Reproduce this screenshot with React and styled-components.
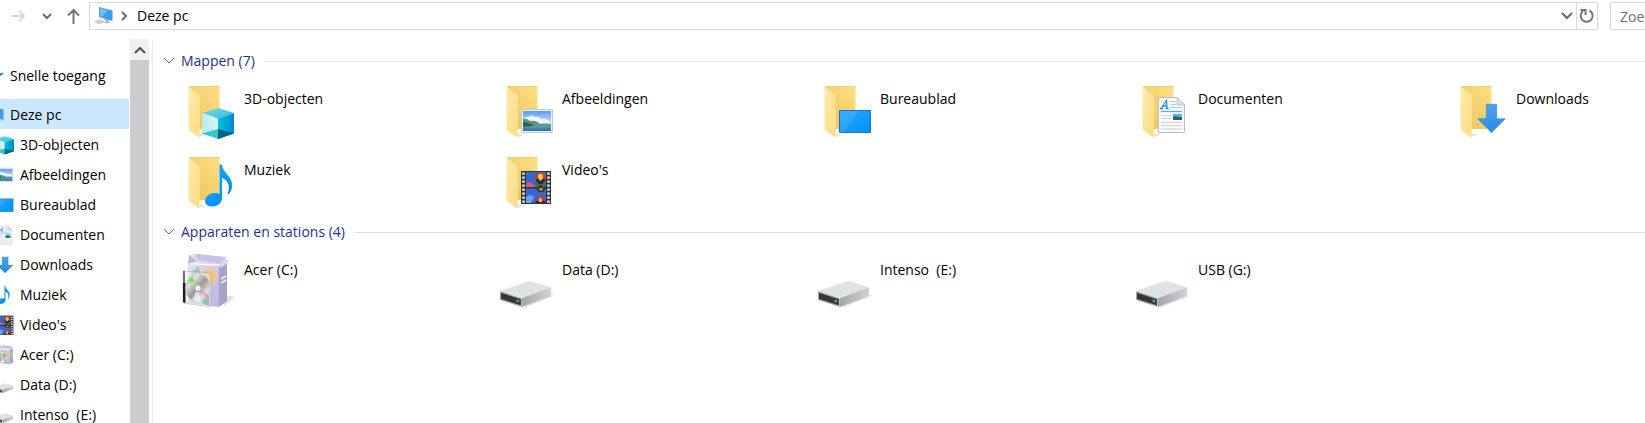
import React from "react";
import styled, { createGlobalStyle } from "styled-components";

const GlobalStyle = createGlobalStyle`
  * { box-sizing: border-box; }
  body {
    margin: 0;
    background: #fff;
    color: #000;
    font: 14px/20px "Open Sans", "Noto Sans", sans-serif;
    overflow: hidden;
  }
  button, input { font: inherit; color: inherit; }
  a { color: inherit; text-decoration: none; }
  svg { display: block; flex: none; }
`;

const Window = styled.div`
  display: flex;
  flex-direction: column;
  height: 100vh;
`;

const Toolbar = styled.header`
  display: flex;
  align-items: center;
  height: 39px;
  padding: 2px 0 9px 6px;
`;

const IconButton = styled.button`
  display: flex;
  align-items: center;
  justify-content: center;
  width: ${(p) => p.$width}px;
  height: 100%;
  padding: 0;
  border: 0;
  background: ${(p) => p.$background || "transparent"};
`;

const AddressBar = styled.div`
  display: flex;
  align-items: center;
  flex: 1;
  min-width: 0;
  height: 28px;
  margin-left: 6px;
  border: 1px solid #d9d9d9;
`;

const Crumbs = styled.nav`
  display: flex;
  align-items: center;
  flex: 1;
  gap: 8px;
  padding-left: 3px;
`;

const CrumbLink = styled.a`
  white-space: nowrap;
`;

const Refresh = styled.div`
  display: flex;
  height: 100%;
  border-left: 1px solid #d9d9d9;
`;

const SearchInput = styled.input`
  flex: none;
  width: 35px;
  height: 28px;
  margin-left: 12px;
  padding: 0 0 0 9px;
  border: 1px solid #d9d9d9;
  border-right: 0;
  border-radius: 0;
  background: #fff;
  outline: 0;
  &::placeholder { color: #6d6d6d; opacity: 1; }
`;

const Body = styled.div`
  display: flex;
  flex: 1;
  min-height: 0;
`;

const Sidebar = styled.nav`
  flex: none;
  width: 130px;
  padding: 21px 1px 0 0;
  overflow: hidden;
`;

const TreeLink = styled.a`
  display: flex;
  align-items: center;
  gap: 6px;
  height: 30px;
  margin-left: -16px;
  margin-bottom: ${(p) => (p.$spaced ? 9 : 0)}px;
  padding-top: 2px;
  padding-left: ${(p) => (p.$nested ? 10 : 0)}px;
  background: ${(p) => (p.$selected ? "#cce8ff" : "transparent")};
  white-space: pre;
`;

const ScrollBar = styled.div`
  flex: none;
  display: flex;
  flex-direction: column;
  width: 19px;
  background: #cdcdcd;
`;

const ScrollUp = styled.div`
  height: 21px;
`;

const Content = styled.main`
  flex: 1;
  min-width: 0;
  margin-left: 3px;
  padding: 10px 0 0 10px;
  border-left: 1px solid #f0f0f0;
`;

const GroupHeader = styled.button`
  display: flex;
  align-items: center;
  gap: 6px;
  width: 100%;
  height: 24px;
  padding: 0;
  border: 0;
  background: transparent;
  color: #1e3287;
  text-align: left;
  &::after {
    content: "";
    flex: 1;
    height: 1px;
    margin-left: 3px;
    background: #e2e2e2;
  }
`;

const Tiles = styled.div`
  display: grid;
  grid-template-columns: repeat(auto-fill, 160px);
  column-gap: 158px;
  padding: 5px 0 0 17px;
`;

const Tile = styled.a`
  display: flex;
  gap: 4px;
  height: 71px;
  padding-top: 4px;
  white-space: pre;
`;

const TileLabel = styled.span`
  padding-top: 7px;
`;

const Defs = styled.svg`
  position: absolute;
`;

const Gradients = () => (
  <Defs width="0" height="0" aria-hidden="true">
    <defs>
      <linearGradient id="folderBack" x1="0" y1="1" x2="1" y2="0">
        <stop offset="0" stopColor="#e9c257" /><stop offset="1" stopColor="#ffe085" />
      </linearGradient>
      <linearGradient id="folderFlap" x1="0" y1="0" x2="1" y2="1">
        <stop offset="0" stopColor="#ffeaa8" /><stop offset="1" stopColor="#fbdc84" />
      </linearGradient>
      <linearGradient id="cubeRight">
        <stop offset="0" stopColor="#00c3d8" /><stop offset="1" stopColor="#0087d2" />
      </linearGradient>
      <linearGradient id="cubeLeft">
        <stop offset="0" stopColor="#b5ecee" /><stop offset="1" stopColor="#d9f6f7" />
      </linearGradient>
      <linearGradient id="cubeTop" x1="0" y1="0" x2="1" y2="1">
        <stop offset="0" stopColor="#7fdde6" /><stop offset="1" stopColor="#2cb9dd" />
      </linearGradient>
      <linearGradient id="sky" x1="0" y1="0" x2="0" y2="1">
        <stop offset="0" stopColor="#5a9af0" /><stop offset="1" stopColor="#e3f3fd" />
      </linearGradient>
      <linearGradient id="lake" x1="0" y1="0" x2="0" y2="1">
        <stop offset="0" stopColor="#77a9bf" /><stop offset="1" stopColor="#286f9d" />
      </linearGradient>
      <linearGradient id="screen" x1="0" y1="0" x2="1" y2="1">
        <stop offset="0" stopColor="#29a9ff" /><stop offset="1" stopColor="#0090f5" />
      </linearGradient>
      <linearGradient id="arrow" x1="0" y1="0" x2="0" y2="1">
        <stop offset="0" stopColor="#4aa3f0" /><stop offset="1" stopColor="#2a8be0" />
      </linearGradient>
      <linearGradient id="note" x1="0" y1="0" x2="1" y2="1">
        <stop offset="0" stopColor="#1dadff" /><stop offset="1" stopColor="#0086ea" />
      </linearGradient>
      <linearGradient id="driveSide">
        <stop offset="0" stopColor="#a3a5a8" /><stop offset="1" stopColor="#d0d2d4" />
      </linearGradient>
      <linearGradient id="boxFront" x1="0" y1="0" x2="1" y2="1">
        <stop offset="0" stopColor="#e2e0f6" /><stop offset="1" stopColor="#b9b5df" />
      </linearGradient>
      <linearGradient id="disc" x1="0" y1="0" x2="1" y2="1">
        <stop offset="0" stopColor="#8a8a8a" /><stop offset=".25" stopColor="#e2e2e2" />
        <stop offset=".5" stopColor="#999999" /><stop offset=".75" stopColor="#e0e0e0" />
        <stop offset="1" stopColor="#808080" />
      </linearGradient>
    </defs>
  </Defs>
);

const FolderBase = () => (
  <g>
    <path d="M19 55L26 53L20 51Z" fill="#e4e4e4" />
    <path d="M9 4H39.500V47H9Z" fill="url(#folderBack)" />
    <path d="M9 4.500H39.500" stroke="#efcf74" />
    <path d="M8.500 4.500L20 13.500V42L19.300 55.500L8.500 48Z" fill="url(#folderFlap)" />
  </g>
);

const Cube = () => (
  <g>
    <path d="M38 26L54 31L38 36.500L22 31Z" fill="url(#cubeTop)" />
    <path d="M22 31L38 36.500V57L22 51.500Z" fill="url(#cubeLeft)" />
    <path d="M54 31L38 36.500V57L54 51.500Z" fill="url(#cubeRight)" />
    <path d="M22 51.500L38 47V57Z" fill="#36c6d3" />
    <path d="M54 51.500L38 47V57Z" fill="#006580" />
  </g>
);

const Picture = () => (
  <g>
    <path d="M23.500 27.500H54.500V50.500H23.500Z" fill="#eef2f5" stroke="#c3cbd2" />
    <path d="M25 29H53V43H25Z" fill="url(#sky)" />
    <path d="M26 37q2-3 5-2q3-3 6 0q5-1 6 2q5-1 8 2v2H26Z" fill="#fff" opacity=".8" />
    <path d="M25 43H53V49H25Z" fill="url(#lake)" />
    <path d="M25 37q4-1 7 2q6-1 10 3q6-1 11 0v2H25Z" fill="#5f9487" />
    <path d="M25 40q6 0 11 4l-11 1Z" fill="#2c6655" />
  </g>
);

const Desktop = () => (
  <g>
    <path d="M23.500 28.500H54.500V50.500H23.500Z" fill="url(#screen)" stroke="#1577bd" />
    <path d="M24 29H43L28 50H24Z" fill="#fff" opacity=".09" />
  </g>
);

const Document = () => (
  <g>
    <path d="M24.500 15.500H43L50.500 23V50.500H24.500Z" fill="#f8f9fa" stroke="#b9bec3" />
    <path d="M43 15.500V23H50.500Z" fill="#dfe3e6" stroke="#b9bec3" strokeWidth=".8" />
    <path d="M27 26.500L32.500 18.500L33 26.500M29 24H33M26 26.500H29M31.500 26.500H34.500" fill="none" stroke="#2d8fd2" strokeWidth="1.300" />
    <path d="M36 19.500H42M36 22.500H42M36 25.500H48" stroke="#a5d2ef" />
    <path d="M27 29.500H48" stroke="#55ade2" strokeWidth="1.200" />
    <path d="M27 33.500H37M27 36.500H37M27 40.500H48M27 43.500H48M27 47H48" stroke="#cfd3d7" />
    <path d="M39 32H48V38H39Z" fill="#58b2e8" />
    <path d="M39 35q3-2 5 0h4v3H39Z" fill="#2a6477" />
  </g>
);

const Download = () => (
  <path d="M34.300 22.300H44.700V36.700H53.300L39.500 50.700L25.700 36.700H34.300Z" fill="url(#arrow)" stroke="#3186d0" strokeWidth=".6" />
);

const Music = () => (
  <path d="M39.500 11.500H42C42.500 20 52.500 23 52 33C52 37 50 40 48.500 41.500L47.500 40.500C51 34 48 27 42 25V45C42 50 37 53.500 32 53.500C28 53.500 25 51.500 25 48C25 43 30 40 35 40C37 40 38.500 40.500 39.500 41Z" fill="url(#note)" />
);

const Film = () => (
  <g>
    <path d="M23 18H53V51H23Z" fill="#343434" />
    <path d="M28 19H48V34H28ZM28 35.500H48V50H28Z" fill="#3568cf" />
    <path d="M28 32Q37 29 48 31V34H28Z" fill="#238048" />
    <path d="M28 31q3-4 6 0q3 0 3 3H28Z" fill="#e45581" />
    <path d="M37 25A5.500 5 0 0 1 48 25Q48 28 44.500 31H40.500Q37 28 37 25Z" fill="#e22f22" />
    <path d="M40.500 21Q39 25 41.500 30H43.500Q46 25 44.500 21Z" fill="#f5cd25" />
    <path d="M37.500 27L40 25.500L42.500 28L45 25.500L47.500 27L44.500 31H40.500Z" fill="#33204a" />
    <path d="M41 32H44V34H41Z" fill="#4d2918" />
    <path d="M38 35.500H48L44.500 39H41Z" fill="#3a2140" />
    <path d="M40.500 35.500H45.500L43 38Z" fill="#e9ca2a" />
    <path d="M41.500 39.500H44.500V41.500H41.500Z" fill="#c9402a" />
    <path d="M28 44q5-4 8 0l-3 6H28Z" fill="#6b9eee" />
    <path d="M37.500 50Q37 44.500 42.500 44.500T47.500 50Z" fill="#e22f22" />
    <path d="M40.500 50L41.500 45H43.500L44.500 50Z" fill="#f5cd25" />
    <path d="M37.500 48.500L39.500 47.500L42.500 49.500L45.500 47.500L47.500 48.500V50H37.500Z" fill="#33204a" />
    <path d="M25.500 19.500V50M50.500 19.500V50" stroke="#e6e6e6" strokeWidth="2.600" strokeDasharray="2.200 1.800" />
  </g>
);

const SetupBox = () => (
  <g>
    <path d="M44 53L53 46Q56 43 50 43L43 44Z" fill="#d6d6d6" opacity=".7" />
    <path d="M9 2L16 1L45 4L47 8L44 12L9 10Z" fill="#dedcf3" />
    <path d="M16 1L46 4L40 11L17 7Z" fill="#c5c2e8" />
    <path d="M9 2L16 8L8 11Z" fill="#bbb8c8" />
    <path d="M8 11L39 13V54L8 50Z" fill="url(#boxFront)" />
    <path d="M39 13L47 8V48L39 54Z" fill="#a7a3c8" />
    <path d="M40 11L48 6V10L40 15Z" fill="#d9d6ef" />
    <path d="M41 26L46 23M41 30L46 27" stroke="#eeedf8" strokeWidth="1.500" />
    <path d="M10 21L18 13L24 27Z" fill="#9ec7b0" />
    <circle cx="29" cy="24" r="8" fill="#f3c483" />
    <path d="M3 18L31 20V54L3 50Z" fill="#e9eeed" opacity=".5" stroke="#9ba6a4" />
    <path d="M3 18L5 18V50L3 49Z" fill="#6b6f6e" />
    <path d="M3 30H5.500V50L3 49Z" fill="#1f1f1f" />
    <path d="M21 49L29 42V53Z" fill="#8bc5a1" />
    <ellipse cx="18" cy="35" rx="12.500" ry="14" fill="url(#disc)" />
    <path d="M18 35L7 29Q9 24 12 23Z" fill="#a9dc94" />
    <path d="M9 28L12 24L14 28Z" fill="#63e637" />
    <path d="M18 35L29 43L27 45Z" fill="#ee91d2" />
    <path d="M18 35L12 47L21 49Z" fill="#fff" opacity=".6" />
    <circle cx="18" cy="35" r="3.500" fill="#e9e9e9" stroke="#999" />
    <circle cx="18" cy="35" r="1.300" fill="#fff" />
  </g>
);

const Drive = () => (
  <g>
    <path d="M24 54L53 42L56 42.500L27 54.500Z" fill="#d4d4d4" opacity=".7" />
    <path d="M2 38L32 27.700L53 34.300L23.700 45.300Z" fill="#e1e2e5" />
    <path d="M23.700 45.300L53 34.300V43L23.700 54Z" fill="url(#driveSide)" />
    <path d="M2 38L23.700 45.300V54L2 47Z" fill="#a8aaac" />
    <path d="M3 39.700L22.800 46.300V52.300L3 46Z" fill="#353738" />
    <path d="M18.500 46.500L21 47.300V49.500L18.500 48.700Z" fill="#35d23c" />
  </g>
);

const Computer = () => (
  <g>
    <path d="M12 12L16 13.500V15.500L18 16.500L14 17.500L10 16L12 15Z" fill="#b4bcc2" />
    <path d="M6 1L19.500 4.500V15L6 11Z" fill="#7b8f9c" />
    <path d="M6.800 2L18.800 5.200V14L6.800 10.300Z" fill="#2da5f3" />
    <path d="M6.800 2L15 4.200L9 11L6.800 10.300Z" fill="#6cc0f8" />
    <path d="M0 15.500L7 13L14 15.500L6 18.500Z" fill="#dcdfe2" />
    <path d="M2 15.500L8 17.500M4 14.500L11 16.500M8 14L3 16.500M11 15.300L5 18" stroke="#b9bec2" strokeWidth=".5" />
  </g>
);

const Pin = () => (
  <path d="M10 3L12.500 7.500L20 7L14 12L15 18L10 15L4 18L6 12L0 7L8 7.500Z" fill="#1b83d3" />
);

const SmallIcon = ({ art: Art, box }) => (
  <svg width="20" height="20" viewBox={box} aria-hidden="true"><Art /></svg>
);

const Stroke = ({ width, height, d, color = "#6b6b6b", weight = 2 }) => (
  <svg width={width} height={height} viewBox={`0 0 ${width} ${height}`} aria-hidden="true">
    <path d={d} fill="none" stroke={color} strokeWidth={weight} />
  </svg>
);

const tree = [
  { label: "Snelle toegang", art: Pin, box: "0 0 20 20", root: true, spaced: true },
  { label: "Deze pc", art: Computer, box: "0 0 20 20", root: true, selected: true },
  { label: "3D-objecten", art: Cube, box: "20 24 34 34" },
  { label: "Afbeeldingen", art: Picture, box: "22 22 34 34" },
  { label: "Bureaublad", art: Desktop, box: "22 22 34 34" },
  { label: "Documenten", art: Document, box: "17 14 38 38" },
  { label: "Downloads", art: Download, box: "20 19 35 35" },
  { label: "Muziek", art: Music, box: "15 9 47 47" },
  { label: "Video's", art: Film, box: "20 17 34 34" },
  { label: "Acer (C:)", art: SetupBox, box: "-6 0 56 56" },
  { label: "Data (D:)", art: Drive, box: "2 6 53 53" },
  { label: "Intenso  (E:)", art: Drive, box: "2 6 53 53" },
];

const groups = [
  {
    title: "Mappen (7)",
    folders: true,
    items: [
      ["3D-objecten", Cube],
      ["Afbeeldingen", Picture],
      ["Bureaublad", Desktop],
      ["Documenten", Document],
      ["Downloads", Download],
      ["Muziek", Music],
      ["Video's", Film],
    ],
  },
  {
    title: "Apparaten en stations (4)",
    items: [
      ["Acer (C:)", SetupBox],
      ["Data (D:)", Drive],
      ["Intenso  (E:)", Drive],
      ["USB (G:)", Drive],
    ],
  },
];

export default function App() {
  return (
    <Window>
      <GlobalStyle />
      <Gradients />
      <Toolbar>
        <IconButton $width={24} aria-label="Volgende" disabled>
          <Stroke width={16} height={12} d="M1 6H14M9 1L14 6L9 11" color="#d6d6d6" />
        </IconButton>
        <IconButton $width={34} aria-label="Recente locaties">
          <Stroke width={10} height={8} d="M1 2L5 6L9 2" />
        </IconButton>
        <IconButton $width={19} aria-label="Omhoog">
          <Stroke width={13} height={17} d="M6.500 16V2M1 7.500L6.500 2L12 7.500" color="#757575" />
        </IconButton>
        <AddressBar>
          <Crumbs aria-label="Adres">
            <SmallIcon art={Computer} box="0 0 20 20" />
            <Stroke width={8} height={10} d="M1 1L5 5L1 9" />
            <CrumbLink href="#deze-pc">Deze pc</CrumbLink>
          </Crumbs>
          <IconButton $width={19} aria-label="Vorige locaties">
            <Stroke width={12} height={8} d="M1 1L6 6L11 1" />
          </IconButton>
          <Refresh>
            <IconButton $width={20} aria-label="Vernieuwen">
              <Stroke width={16} height={16} d="M10.500 2.500A6 6 0 1 1 4 3M1.500 2H6.500V7" color="#757575" />
            </IconButton>
          </Refresh>
        </AddressBar>
        <SearchInput type="text" aria-label="Zoeken" placeholder="Zoeken" />
      </Toolbar>
      <Body>
        <Sidebar aria-label="Navigatie">
          {tree.map((n) => (
            <TreeLink key={n.label} href="#map" $nested={!n.root} $spaced={n.spaced} $selected={n.selected}>
              <SmallIcon art={n.art} box={n.box} />
              {n.label}
            </TreeLink>
          ))}
        </Sidebar>
        <ScrollBar>
          <ScrollUp>
            <IconButton $width={19} $background="#f0f0f0" aria-label="Omhoog schuiven">
              <Stroke width={12} height={8} d="M1 7L6 2L11 7" color="#505050" />
            </IconButton>
          </ScrollUp>
        </ScrollBar>
        <Content>
          {groups.map((g) => (
            <section key={g.title}>
              <GroupHeader aria-expanded="true">
                <Stroke width={12} height={8} d="M1 1L6 6L11 1" weight={1} />
                {g.title}
              </GroupHeader>
              <Tiles>
                {g.items.map(([label, Art]) => (
                  <Tile key={label} href="#item">
                    <svg width="60" height="60" viewBox="0 0 60 60" aria-hidden="true">
                      {g.folders && <FolderBase />}
                      <Art />
                    </svg>
                    <TileLabel>{label}</TileLabel>
                  </Tile>
                ))}
              </Tiles>
            </section>
          ))}
        </Content>
      </Body>
    </Window>
  );
}
